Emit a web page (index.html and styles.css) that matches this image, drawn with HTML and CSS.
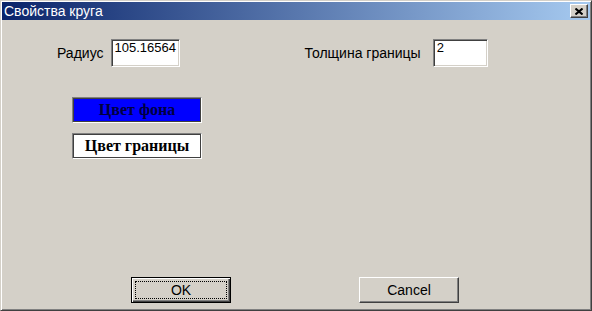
FILE: index.html
```html
<!DOCTYPE html>
<html lang="ru">
<head>
    <meta charset="UTF-8">
    <title>Свойства круга</title>
    <link rel="stylesheet" href="styles.css">
</head>
<body>
    <div class="window">
        <div class="titlebar">
            <span class="title">Свойства круга</span>
            <button class="close" type="button">
                <svg width="8" height="7" viewBox="0 0 8 7">
                    <path d="M0.5 0.5 L7.5 6.5 M7.5 0.5 L0.5 6.5" stroke="#000" stroke-width="2" fill="none"/>
                </svg>
            </button>
        </div>

        <div class="content">
            <div class="fields">
                <div class="field field-radius">
                    <label for="radius">Радиус</label>
                    <input type="text" id="radius" value="105.16564">
                </div>
                <div class="field field-border">
                    <label for="border">Толщина границы</label>
                    <input type="text" id="border" value="2">
                </div>
            </div>

            <div class="colors">
                <button class="color-btn color-fill" type="button">Цвет фона</button>
                <button class="color-btn color-line" type="button">Цвет границы</button>
            </div>

            <div class="footer">
                <button class="btn btn-default" type="button"><span class="focus">OK</span></button>
                <button class="btn" type="button">Cancel</button>
            </div>
        </div>
    </div>
</body>
</html>
```

FILE: styles.css
```css
* {
    box-sizing: border-box;
}
body {
    margin: 0;
    background-color: #d4d0c8;
    font-family: 'Liberation Sans', Arial, sans-serif;
    color: #000;
}
.window {
    width: 592px;
    height: 311px;
    display: flex;
    flex-direction: column;
    padding: 1px;
    background-color: #d4d0c8;
    border: 1px solid;
    border-color: #d4d0c8 #404040 #404040 #d4d0c8;
    box-shadow: inset 1px 1px #fff, inset -1px -1px #808080;
}
.titlebar {
    height: 18px;
    display: flex;
    align-items: center;
    justify-content: space-between;
    padding: 0 2px 0 2px;
    background: linear-gradient(to right, #0a246a, #a6caf0);
}
.title {
    color: #fff;
    font-size: 14px;
}
.close {
    width: 18px;
    height: 14px;
    padding: 0;
    display: flex;
    align-items: center;
    justify-content: center;
    background-color: #d4d0c8;
    border: 1px solid;
    border-color: #fff #404040 #404040 #fff;
    box-shadow: inset -1px -1px #808080;
}
.close svg {
    display: block;
}
.content {
    flex: 1;
    display: flex;
    flex-direction: column;
    padding: 19px 0 6px 0;
}
.fields {
    display: flex;
    align-items: center;
    padding-left: 55px;
}
.field {
    display: flex;
    align-items: center;
}
.field label {
    font-size: 14px;
}
.field-radius label {
    margin-right: 7px;
}
.field-border {
    margin-left: 125px;
}
.field-border label {
    margin-right: 12px;
}
.field input {
    height: 28px;
    padding: 1px 2px 12px 3px;
    font-family: 'Liberation Sans', Arial, sans-serif;
    font-size: 13px;
    line-height: 13px;
    background-color: #fff;
    border: 1px solid;
    border-color: #808080 #fff #fff #808080;
    box-shadow: inset 1px 1px #404040, inset -1px -1px #d4d0c8;
    outline: none;
}
#radius {
    width: 69px;
}
#border {
    width: 55px;
}
.colors {
    display: flex;
    flex-direction: column;
    gap: 10px;
    margin-top: 30px;
    padding-left: 70px;
}
.color-btn {
    width: 130px;
    height: 26px;
    padding: 0;
    font-family: 'Liberation Serif', 'Times New Roman', serif;
    font-weight: bold;
    font-size: 16px;
    color: #000;
    border: 1px solid;
    border-color: #808080 #fff #fff #808080;
    box-shadow: inset 1px 1px #404040, inset -1px -1px #404040;
}
.color-fill {
    background-color: #0000ff;
    color: #000040;
}
.color-line {
    background-color: #fff;
}
.footer {
    margin-top: auto;
    display: flex;
    gap: 128px;
    padding-left: 129px;
}
.btn {
    width: 100px;
    height: 26px;
    padding: 0;
    font-family: 'Liberation Sans', Arial, sans-serif;
    font-size: 14px;
    color: #000;
    background-color: #d4d0c8;
    border: 1px solid;
    border-color: #fff #404040 #404040 #fff;
    box-shadow: inset -1px -1px #808080, inset 1px 1px #d4d0c8;
}
.btn-default {
    border: 1px solid #000;
    box-shadow: inset 1px 1px #fff, inset -1px -1px #404040, inset -2px -2px #808080;
    padding: 3px;
}
.focus {
    display: flex;
    align-items: center;
    justify-content: center;
    height: 100%;
    border: 1px dotted #000;
}
```
